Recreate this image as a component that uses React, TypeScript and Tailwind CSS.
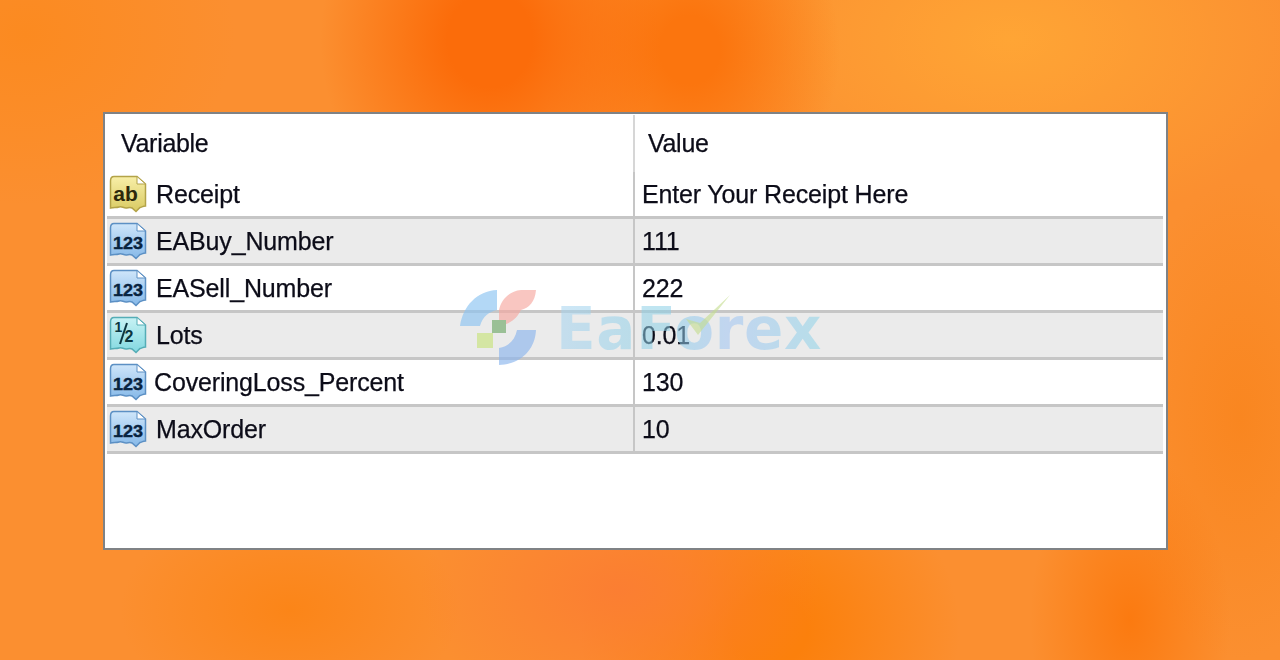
const rows = [
  { name: "Receipt", value: "Enter Your Receipt Here", kind: "ab", nameClass: "ml-[9px]" },
  { name: "EABuy_Number", value: "111", kind: "123", nameClass: "ml-[9px]" },
  { name: "EASell_Number", value: "222", kind: "123", nameClass: "ml-[9px]" },
  { name: "Lots", value: "0.01", kind: "half", nameClass: "ml-[9px]" },
  { name: "CoveringLoss_Percent", value: "130", kind: "123", nameClass: "ml-[7px]" },
  { name: "MaxOrder", value: "10", kind: "123", nameClass: "ml-[9px]" },
];

function VarIcon({ kind }: { kind: string }) {
  const palette =
    kind === "ab"
      ? { a: "#f8efa8", b: "#d9ca62", s: "#b3a348", ink: "#2c280c" }
      : kind === "half"
        ? { a: "#c8f2f4", b: "#82d8e0", s: "#55adb6", ink: "#0b3540" }
        : { a: "#cfe6fa", b: "#85b8e8", s: "#5c90c4", ink: "#08233f" };
  const id = `g-${kind}`;
  return (
    <svg width="38" height="38" viewBox="0 0 38 38" className="shrink-0">
      <defs>
        <linearGradient id={id} x1="0" y1="0" x2="0" y2="1">
          <stop offset="0" stopColor={palette.a} />
          <stop offset="1" stopColor={palette.b} />
        </linearGradient>
      </defs>
      <path
        d="M5 1.5 H28 L36.5 9 V31 C34 31 33 32 31 32.5 L27 36.5 L23 33 C21 32 19 33 17 33 C14 33 13 31 10 32 C7 33 5 32 1.5 33 V6 C1.5 3 3 1.5 5 1.5 Z"
        fill={`url(#${id})`}
        stroke={palette.s}
        strokeWidth="1.5"
      />
      <path d="M28 1.5 V9 H36.5 Z" fill="#ffffff" stroke={palette.s} strokeWidth="1" />
      {kind === "ab" && (
        <text x="16.5" y="26" textAnchor="middle" fontFamily="'Liberation Sans', sans-serif" fontWeight="700" fontSize="21" fill={palette.ink}>ab</text>
      )}
      {kind === "123" && (
        <text x="19" y="27" textAnchor="middle" fontFamily="'Liberation Sans', sans-serif" fontWeight="700" fontSize="16" textLength="30" lengthAdjust="spacingAndGlyphs" stroke={palette.ink} strokeWidth="0.4" fill={palette.ink}>123</text>
      )}
      {kind === "half" && (
        <g>
          <text x="9.5" y="16" textAnchor="middle" fontFamily="'Liberation Sans', sans-serif" fontWeight="700" fontSize="14" fill={palette.ink}>1</text>
          <path d="M18 7 L11 28" stroke={palette.ink} strokeWidth="2" />
          <text x="20" y="26" textAnchor="middle" fontFamily="'Liberation Sans', sans-serif" fontWeight="700" fontSize="16" fill={palette.ink}>2</text>
        </g>
      )}
    </svg>
  );
}

function Logo() {
  return (
    <svg width="80" height="80" viewBox="0 0 80 80" className="shrink-0 opacity-65">
      <path d="M38 2 C18 3 4 18 1 38 H21 C24 28 30 24 38 22 Z" fill="#8cc4f2" />
      <path d="M77 2 H62 C50 3 42 12 40 22 V38 C52 36 58 30 62 22 C70 20 76 14 77 2 Z" fill="#f7a8a0" />
      <path d="M77 42 H58 C56 52 50 58 40 60 V77 C62 76 76 62 77 42 Z" fill="#8cb6ee" />
      <rect x="33" y="32" width="14" height="13" fill="#6faa6a" />
      <rect x="18" y="45" width="16" height="15" fill="#c9e47e" />
    </svg>
  );
}

export default function App() {
  return (
    <div className="relative flex h-[660px] w-[1280px] items-start overflow-hidden bg-[#fb8f30] bg-[radial-gradient(ellipse_170px_190px_at_490px_40px,#fb6c0a_0%,#fb6c0a_25%,transparent_100%),radial-gradient(ellipse_150px_170px_at_690px_50px,#fb750e_0%,#fb750e_20%,transparent_100%),radial-gradient(ellipse_320px_190px_at_1010px_40px,#ffa535_0%,transparent_100%),radial-gradient(ellipse_210px_170px_at_25px_35px,#fb8a20_0%,transparent_100%),radial-gradient(ellipse_200px_130px_at_620px_590px,#fb7e32_0%,transparent_100%),radial-gradient(ellipse_190px_170px_at_770px_630px,#fb800c_0%,#fb800c_20%,transparent_100%),radial-gradient(ellipse_100px_170px_at_1130px_620px,#fb7a10_0%,transparent_100%),radial-gradient(ellipse_170px_110px_at_290px_610px,#fb8518_0%,transparent_100%),radial-gradient(ellipse_120px_240px_at_1240px_420px,#f98620_0%,transparent_100%)] pl-[103px] pt-[112px] font-['Liberation_Sans',sans-serif]">
      <div className="relative h-[438px] w-[1065px] border-2 border-[#7f8285] bg-white pl-[2px] pr-[3px] pt-[1px]">
        <div className="flex h-[57px] text-[25px] text-[#0c0c18] blur-[0.4px] [-webkit-text-stroke:0.25px_#0c0c18]">
          <div className="flex w-[528px] items-center border-r-2 border-[#d6d6d6] pl-[14px]">
            <span className="tracking-[-0.3px]">Variable</span>
          </div>
          <div className="flex flex-1 items-center pl-[13px]">
            <span className="tracking-[-0.3px]">Value</span>
          </div>
        </div>
        {rows.map((r, i) => (
          <div
            key={r.name}
            className={`flex h-[47px] items-center border-b-[3px] border-[#c6c6c6] text-[25px] text-[#0c0c18] [-webkit-text-stroke:0.25px_#0c0c18] ${i % 2 === 1 ? "bg-[#ebebeb]" : "bg-white"}`}
          >
            <div className="flex h-full w-[528px] items-center border-r-2 border-[#c6c6c6] pl-[2px]">
              <VarIcon kind={r.kind} />
              <span className={`${r.nameClass} mt-[2px] blur-[0.4px] tracking-[-0.15px]`}>{r.name}</span>
            </div>
            <span className="mt-[2px] pl-[7px] blur-[0.4px] tracking-[-0.15px]">{r.value}</span>
          </div>
        ))}
      </div>
      <div className="absolute left-[459px] top-[288px] flex items-center gap-[17px]">
        <Logo />
        <span className="mt-[1px] bg-[linear-gradient(90deg,#a8d4f0_0%,#8ad0e6_40%,#a0c4f4_65%,#8ed4e8_100%)] bg-clip-text text-[58px] leading-none font-bold tracking-[0.7px] text-transparent opacity-55 font-['DejaVu_Sans',sans-serif]">
          EaForex
        </span>
        <svg width="60" height="50" viewBox="0 0 60 50" className="absolute left-[225px] top-[5px] opacity-60">
          <path d="M2 26 L14 42 L46 2 L16 30 Z" fill="#c4dd8e" />
        </svg>
      </div>
    </div>
  );
}
